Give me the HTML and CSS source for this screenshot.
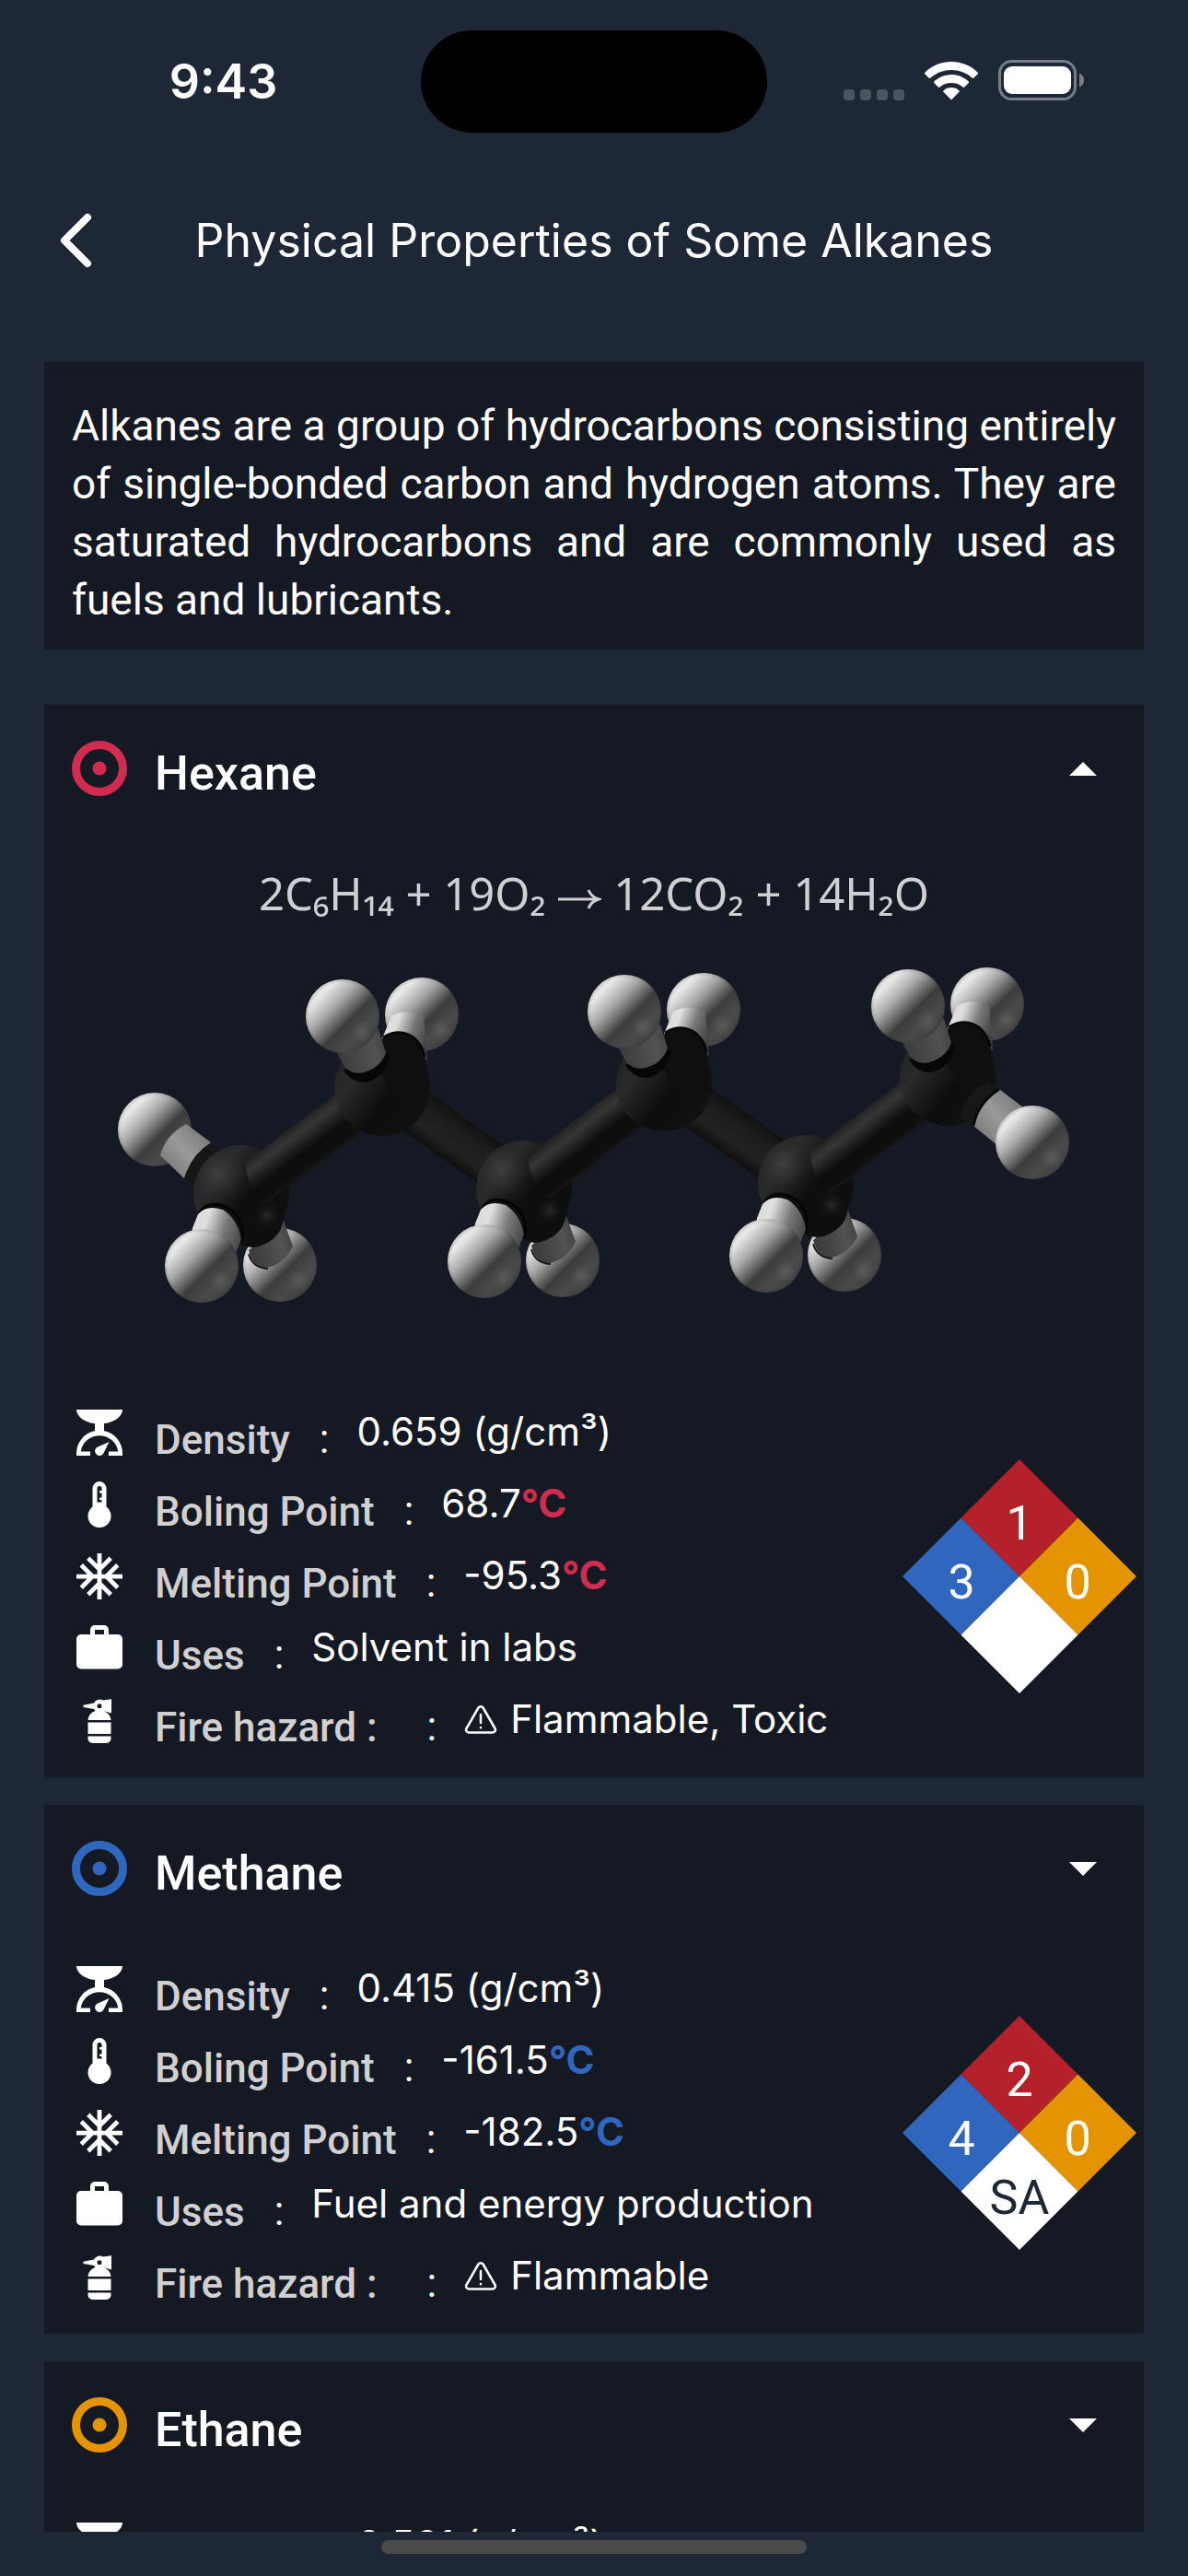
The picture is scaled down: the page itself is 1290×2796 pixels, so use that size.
FILE: index.html
```
<!DOCTYPE html>
<html lang="en">
<head>
  <meta charset="UTF-8">
  <meta name="viewport" content="width=device-width, initial-scale=1">
  <title>Physical Properties of Some Alkanes</title>
  <link rel="stylesheet" href="styles.css">
</head>
<body>
  <!-- shared icons -->
  <svg class="defs" width="0" height="0" aria-hidden="true">
    <symbol id="icon-scale" viewBox="0 0 24 24">
      <path d="M2 2h20c0 3-3.6 5.6-8 6v3.2A10 10 0 0 1 22 21v1h-6v-1.8h4.1A8.2 8.2 0 0 0 3.9 20.2H8V22H2v-1a10 10 0 0 1 8-9.8V8C5.6 7.6 2 5 2 2z"/>
      <path d="M16.2 16l-2.3 4.700a2 2 0 1 1-3.100-2.300z"/>
    </symbol>
    <symbol id="icon-thermometer" viewBox="0 0 24 24">
      <path fill-rule="evenodd" d="M15 13V5a3 3 0 0 0-6 0v8a5 5 0 1 0 6 0zM12 4a1 1 0 0 1 1 1v1h-1v1h1v2h-1v1h1v1h-2V5a1 1 0 0 1 1-1z"/>
    </symbol>
    <symbol id="icon-snow" viewBox="0 0 24 24">
      <path fill="none" stroke="currentColor" stroke-width="1.9" d="M12 2v20M2 12h20M7.1 4.1L12 9l4.9-4.9M7.1 19.9L12 15l4.9 4.9M4.1 7.1L9 12l-4.9 4.9M19.9 7.1L15 12l4.9 4.9"/>
    </symbol>
    <symbol id="icon-case" viewBox="0 0 24 24">
      <path fill-rule="evenodd" d="M10 2h4a2 2 0 0 1 2 2v2h4a2 2 0 0 1 2 2v11a2 2 0 0 1-2 2H4a2 2 0 0 1-2-2V8a2 2 0 0 1 2-2h4V4a2 2 0 0 1 2-2zM10 4v2h4V4z"/>
    </symbol>
    <symbol id="icon-extinguisher" viewBox="0 0 24 24">
      <path fill-rule="evenodd" d="M5 5.5L9.6 4.6A2.8 2.8 0 0 1 13.5 3.4L17.2 2.9V9l-3.4-.9C15.6 8.7 16.8 10 17 12H7c.2-2 1.4-3.4 3.2-4L9.6 7.2 5 6.4zM12 4.9a1 1 0 1 0 0 2 1 1 0 0 0 0-2z"/>
      <path d="M7 13h10v5H7zM7 19h10v1a2 2 0 0 1-2 2H9a2 2 0 0 1-2-2z"/>
    </symbol>
    <symbol id="icon-warning" viewBox="0 0 36 32">
      <path fill="none" stroke="currentColor" stroke-width="2.5" stroke-linejoin="round" d="M15.5 3.5L2.5 26a3 3 0 0 0 2.5 4.5h26a3 3 0 0 0 2.5-4.5L20.5 3.5a3 3 0 0 0-5 0z"/>
      <path fill="none" stroke="currentColor" stroke-width="2.5" stroke-linecap="round" d="M18 11v9M18 25v.2"/>
    </symbol>
    <symbol id="icon-target" viewBox="0 0 60 60">
      <circle cx="30" cy="30" r="25.5" fill="none" stroke="currentColor" stroke-width="9"/>
      <circle cx="30" cy="30" r="7.5"/>
    </symbol>
  </svg>

  <div class="status-bar">
    <span class="time">9:43</span>
    <span class="island"></span>
    <span class="status-icons">
      <svg class="signal" width="66" height="12" viewBox="0 0 66 12">
        <rect width="12" height="12" rx="4"/><rect x="18" width="12" height="12" rx="4"/><rect x="36" width="12" height="12" rx="4"/><rect x="54" width="12" height="12" rx="4"/>
      </svg>
      <svg width="58" height="42" viewBox="0 0 58 42">
        <path d="M29 0C40 0 50 4 57.5 11.5c.7.7.7 1.3 0 2L53.5 17.500c-.6.6-1.3.6-2 0C45.500 12 37.500 9 29 9S12.500 12 6.500 17.500c-.7.6-1.400.6-2 0L.5 13.500c-.7-.7-.7-1.300 0-2C8 4 18 0 29 0z"/>
        <path d="M29 14c7 0 13.5 2.6 18.500 7.200.7.7.7 1.300 0 2l-4.200 4.200c-.6.6-1.200.6-1.900 0C38 24.500 33.700 23 29 23s-9 1.500-12.400 4.400c-.7.6-1.300.6-1.900 0l-4.200-4.200c-.7-.7-.7-1.300 0-2C15.500 16.600 22 14 29 14z"/>
        <path d="M29 28c3.2 0 6.2 1.200 8.300 3.200.7.6.7 1.200 0 1.900l-7.300 7.400c-.7.7-1.300.7-2 0l-7.300-7.400c-.7-.7-.7-1.300 0-1.900C22.800 29.200 25.800 28 29 28z"/>
      </svg>
      <svg width="94" height="44" viewBox="0 0 94 44">
        <rect x="1.5" y="1.5" width="82" height="41" rx="13" fill="none" stroke="#787e87" stroke-width="3"/>
        <rect x="6" y="7" width="73" height="30" rx="9"/>
        <path d="M88 14.5c3 1 5 4 5 7.5s-2 6.5-5 7.5z" fill="#787e87"/>
      </svg>
    </span>
  </div>

  <header class="app-bar">
    <button class="back-button" aria-label="Back">
      <svg width="36" height="60" viewBox="0 0 36 60"><path d="M31 5L6 30l25 25" fill="none" stroke="#fff" stroke-width="8" stroke-linecap="round" stroke-linejoin="round"/></svg>
    </button>
    <h1>Physical Properties of Some Alkanes</h1>
  </header>

  <main class="content">
    <p class="intro">Alkanes are a group of hydrocarbons consisting entirely of single-bonded carbon and hydrogen atoms. They are saturated hydrocarbons and are commonly used as fuels and lubricants.</p>

    <section class="card red">
      <div class="card-header">
        <svg class="target"><use href="#icon-target"/></svg>
        <h2>Hexane</h2>
        <button class="toggle" aria-label="Collapse Hexane" aria-expanded="true">
          <svg width="30" height="15" viewBox="0 0 30 15"><path d="M0 15L15 0l15 15z"/></svg>
        </button>
      </div>

      <p class="formula">2C₆H₁₄ + 19O₂ <svg class="arrow" viewBox="0 0 48 24" role="img" aria-label="yields"><path d="M1 12h44M34 2c2 5 6 8.5 11 10-5 1.5-9 5-11 10"/></svg> 12CO₂ + 14H₂O</p>

      <svg class="molecule" viewBox="0 0 1134 420" role="img" aria-label="Hexane molecule">
        <defs>
          <linearGradient id="hydrogen" x1=".12" y1=".12" x2=".88" y2=".88">
            <stop offset="0" stop-color="#dedede"/>
            <stop offset=".12" stop-color="#e8e8e8"/>
            <stop offset=".34" stop-color="#a8a8a8"/>
            <stop offset=".6" stop-color="#3d3d3d"/>
            <stop offset=".8" stop-color="#4a4a4a"/>
            <stop offset="1" stop-color="#404040"/>
          </linearGradient>
          <radialGradient id="shine" cx=".76" cy=".71" r=".15">
            <stop offset="0" stop-color="#6c6c6c" stop-opacity=".5"/>
            <stop offset="1" stop-color="#6c6c6c" stop-opacity="0"/>
          </radialGradient>
          <radialGradient id="rim">
            <stop offset=".9" stop-color="#222" stop-opacity="0"/>
            <stop offset="1" stop-color="#222" stop-opacity=".15"/>
          </radialGradient>
          <linearGradient id="carbon" x1=".1" y1=".2" x2=".9" y2=".8">
            <stop offset="0" stop-color="#242424"/>
            <stop offset=".2" stop-color="#2a2a2a"/>
            <stop offset=".6" stop-color="#0d0d0d"/>
            <stop offset="1" stop-color="#111"/>
          </linearGradient>
          <radialGradient id="carbon-shine" cx=".26" cy=".3" r=".3">
            <stop offset="0" stop-color="#444" stop-opacity=".8"/>
            <stop offset="1" stop-color="#333" stop-opacity="0"/>
          </radialGradient>
          <radialGradient id="lobe-shine">
            <stop offset="0" stop-color="#2a2a2a"/>
            <stop offset="1" stop-color="#0e0e0e" stop-opacity="0"/>
          </radialGradient>
          <linearGradient id="bond-rise" x2="0" y2="1">
            <stop offset="0" stop-color="#242424"/>
            <stop offset=".2" stop-color="#363636"/>
            <stop offset=".6" stop-color="#0d0d0d"/>
            <stop offset=".9" stop-color="#0e0e0e"/>
            <stop offset="1" stop-color="#171717"/>
          </linearGradient>
          <linearGradient id="bond-fall" x2="0" y2="1">
            <stop offset="0" stop-color="#111"/>
            <stop offset=".3" stop-color="#1d1d1d"/>
            <stop offset=".7" stop-color="#222"/>
            <stop offset="1" stop-color="#0e0e0e"/>
          </linearGradient>
          <linearGradient id="stub-light" x1="0" y1=".3" x2="1" y2=".7">
            <stop offset="0" stop-color="#dadada"/>
            <stop offset=".25" stop-color="#e0e0e0"/>
            <stop offset=".6" stop-color="#777"/>
            <stop offset="1" stop-color="#3c3c3c"/>
          </linearGradient>
          <linearGradient id="stub-dark" x1="0" y1=".6" x2="1" y2=".3">
            <stop offset="0" stop-color="#3a3a3a"/>
            <stop offset=".7" stop-color="#525252"/>
            <stop offset="1" stop-color="#404040"/>
          </linearGradient>
          <linearGradient id="stub-end" x1="1" y1="0" x2="0" y2="1">
            <stop offset="0" stop-color="#6e6e6e"/>
            <stop offset=".5" stop-color="#9a9a9a"/>
            <stop offset="1" stop-color="#6e6e6e"/>
          </linearGradient>

          <g id="h-atom">
            <circle r="40" fill="url(#hydrogen)"/>
            <circle r="40" fill="url(#shine)"/>
            <circle r="40" fill="url(#rim)"/>
          </g>

          <!-- carbon with both hydrogens above it -->
          <g id="c-up">
            <use href="#h-atom" x="43" y="-80"/>
            <path d="M0-54L10-78q15-9 35 0l4 48z" fill="url(#stub-light)"/>
            <circle r="52" fill="url(#carbon)"/>
            <path d="M1-55Q20-66 35-54 44-46 46-34L52-4 20 20-4-20z" fill="#0f0f0f"/>
            <path d="M1-55Q20-66 35-54 44-46 46-34" fill="none" stroke="#060606" stroke-width="3"/>
            <path d="M-42-20Q-34-6-18-6 2-10 8-34L0-44z" fill="#070707"/>
            <path d="M-52-44L-41-23Q-32-14-20-17-2-22 4-38L-4-64-26-76z" fill="url(#stub-dark)"/>
            <use href="#h-atom" x="-43" y="-78"/>
          </g>

          <!-- carbon with both hydrogens below it -->
          <g id="c-down">
            <use href="#h-atom" x="42" y="78"/>
            <path d="M8 62Q12 80 27 81 46 78 56 58L46 30z" fill="url(#stub-dark)"/>
            <path d="M8 66Q12 81 29 82" fill="none" stroke="#161616" stroke-width="2"/>
            <circle r="52" fill="url(#carbon)"/>
            <circle r="52" fill="url(#carbon-shine)"/>
            <path d="M0 56Q12 62 24 56 42 48 45 32L52 4 20-6-6 30z" fill="#0e0e0e"/>
            <circle cx="28" cy="24" r="16" fill="url(#lobe-shine)"/>
            <path d="M-46 22Q-36 6-14 16 6 30 0 54" fill="#101010" stroke="#050505" stroke-width="3"/>
            <path d="M-47 23Q-38 12-20 18-4 28 0 50-4 62-10 72L-30 84-56 60-53 38z" fill="url(#stub-light)"/>
            <use href="#h-atom" x="-43" y="79"/>
          </g>
        </defs>

        <g fill="url(#bond-rise)">
          <rect y="-25" width="189" height="50" transform="translate(186 275) rotate(-37)"/>
          <rect y="-25" width="189" height="50" transform="translate(490 270) rotate(-37)"/>
          <rect y="-25" width="189" height="50" transform="translate(797 264) rotate(-37)"/>
        </g>
        <g fill="url(#bond-fall)">
          <rect y="-25" width="187" height="50" transform="translate(337 161) rotate(35)"/>
          <rect y="-25" width="187" height="50" transform="translate(643 156) rotate(35)"/>
        </g>

        <use href="#h-atom" x="90" y="206"/>
        <path d="M150 220l24 16-32 38-20-15q4-22 28-39z" fill="#161616"/>
        <path d="M124 200l27 20q-22 14-29 39l-26-25q6-22 28-34z" fill="url(#stub-end)"/>

        <use href="#c-down" x="184" y="275"/>
        <use href="#c-down" x="491" y="270"/>
        <use href="#c-down" x="797" y="264"/>
        <use href="#c-up" x="337" y="161"/>
        <use href="#c-up" x="643" y="156"/>
        <use href="#c-up" x="951" y="150"/>

        <!-- front end of the rising bonds, over the lower carbons -->
        <g fill="url(#bond-rise)">
          <path d="M24-24H90V25H14Q8 0 24-24z" transform="translate(184 275) rotate(-37)"/>
          <path d="M24-24H90V25H14Q8 0 24-24z" transform="translate(491 270) rotate(-37)"/>
          <path d="M24-24H90V25H14Q8 0 24-24z" transform="translate(797 264) rotate(-37)"/>
        </g>

        <path d="M994 154l13 8q-24 16-28 40l-14-9q4-26 29-39z" fill="#171717"/>
        <path d="M1007 162l26 20-28 41-26-21q4-24 28-40z" fill="url(#stub-end)"/>
        <path d="M1007 162q-24 16-28 40" fill="none" stroke="#060606" stroke-width="3"/>
        <use href="#h-atom" x="1043" y="220"/>
      </svg>

      <div class="details">
        <ul class="properties">
          <li><svg><use href="#icon-scale"/></svg><span class="label">Density</span><span class="colon">:</span><span class="value">0.659 (g/cm³)</span></li>
          <li><svg><use href="#icon-thermometer"/></svg><span class="label">Boling Point</span><span class="colon">:</span><span class="value">68.7<b>°C</b></span></li>
          <li><svg><use href="#icon-snow"/></svg><span class="label">Melting Point</span><span class="colon">:</span><span class="value">-95.3<b>°C</b></span></li>
          <li><svg><use href="#icon-case"/></svg><span class="label">Uses</span><span class="colon">:</span><span class="value">Solvent in labs</span></li>
          <li><svg><use href="#icon-extinguisher"/></svg><span class="label">Fire hazard :&nbsp;&nbsp;</span><span class="colon">:</span><span class="value"><svg class="warning"><use href="#icon-warning"/></svg>Flammable, Toxic</span></li>
        </ul>
        <svg class="hazard" viewBox="0 0 254 254" role="img" aria-label="Health 3, flammability 1, reactivity 0">
          <path fill="#b5212b" d="M127 0l63.5 63.5L127 127 63.5 63.5z"/>
          <path fill="#3066be" d="M63.5 63.5L127 127l-63.5 63.5L0 127z"/>
          <path fill="#e49400" d="M190.5 63.5L254 127l-63.5 63.5L127 127z"/>
          <path fill="#fff" d="M127 127l63.5 63.5L127 254l-63.5-63.5z"/>
          <text x="127" y="87">1</text>
          <text x="64" y="151">3</text>
          <text x="190" y="151">0</text>
        </svg>
      </div>
    </section>

    <section class="card blue">
      <div class="card-header">
        <svg class="target"><use href="#icon-target"/></svg>
        <h2>Methane</h2>
        <button class="toggle" aria-label="Expand Methane" aria-expanded="false">
          <svg width="30" height="15" viewBox="0 0 30 15"><path d="M0 0h30L15 15z"/></svg>
        </button>
      </div>

      <div class="details">
        <ul class="properties">
          <li><svg><use href="#icon-scale"/></svg><span class="label">Density</span><span class="colon">:</span><span class="value">0.415 (g/cm³)</span></li>
          <li><svg><use href="#icon-thermometer"/></svg><span class="label">Boling Point</span><span class="colon">:</span><span class="value">-161.5<b>°C</b></span></li>
          <li><svg><use href="#icon-snow"/></svg><span class="label">Melting Point</span><span class="colon">:</span><span class="value">-182.5<b>°C</b></span></li>
          <li><svg><use href="#icon-case"/></svg><span class="label">Uses</span><span class="colon">:</span><span class="value">Fuel and energy production</span></li>
          <li><svg><use href="#icon-extinguisher"/></svg><span class="label">Fire hazard :&nbsp;&nbsp;</span><span class="colon">:</span><span class="value"><svg class="warning"><use href="#icon-warning"/></svg>Flammable</span></li>
        </ul>
        <svg class="hazard" viewBox="0 0 254 254" role="img" aria-label="Health 4, flammability 2, reactivity 0, simple asphyxiant">
          <path fill="#b5212b" d="M127 0l63.5 63.5L127 127 63.5 63.5z"/>
          <path fill="#3066be" d="M63.5 63.5L127 127l-63.5 63.5L0 127z"/>
          <path fill="#e49400" d="M190.5 63.5L254 127l-63.5 63.5L127 127z"/>
          <path fill="#fff" d="M127 127l63.5 63.5L127 254l-63.5-63.5z"/>
          <text x="127" y="87">2</text>
          <text x="64" y="151">4</text>
          <text x="190" y="151">0</text>
          <text class="special" x="127" y="215">SA</text>
        </svg>
      </div>
    </section>

    <section class="card orange">
      <div class="card-header">
        <svg class="target"><use href="#icon-target"/></svg>
        <h2>Ethane</h2>
        <button class="toggle" aria-label="Expand Ethane" aria-expanded="false">
          <svg width="30" height="15" viewBox="0 0 30 15"><path d="M0 0h30L15 15z"/></svg>
        </button>
      </div>

      <div class="details">
        <ul class="properties">
          <li><svg><use href="#icon-scale"/></svg><span class="label">Density</span><span class="colon">:</span><span class="value">0.561 (g/cm³)</span></li>
        </ul>
      </div>
    </section>
  </main>

  <div class="home-bar"></div>
</body>
</html>
```
FILE: styles.css
```
* {
  box-sizing: border-box;
}
body {
  margin: 0;
  height: 100vh;
  display: flex;
  flex-direction: column;
  overflow: hidden;
  background-color: #1e2735;
  color: #fff;
  font-family: Roboto, sans-serif;
}
h1, h2, p, ul {
  margin: 0;
  padding: 0;
}
button {
  border: none;
  padding: 0;
  background: none;
  color: inherit;
  cursor: pointer;
}
svg {
  display: block;
  flex: none;
  fill: currentColor;
}
.defs {
  position: absolute;
}

/* status bar */
.status-bar {
  flex: none;
  display: grid;
  grid-template-columns: 1fr 376px 1fr;
  align-items: center;
  height: 177px;
}
.time {
  padding-left: 28px;
  font-family: Inter, sans-serif;
  font-size: 52px;
  font-weight: 600;
  text-align: center;
}
.island {
  height: 111px;
  border-radius: 56px;
  background-color: #000;
}
.status-icons {
  display: flex;
  justify-content: flex-end;
  align-items: flex-end;
  gap: 22px;
  padding: 0 112px 4px 0;
}
.signal {
  color: #4b545f;
}

/* title bar */
.app-bar {
  flex: none;
  display: grid;
  grid-template-columns: 100px 1fr 100px;
  align-items: center;
  height: 168px;
}
.back-button {
  justify-self: end;
}
h1 {
  font-family: Inter, sans-serif;
  font-size: 50px;
  font-weight: 400;
  text-align: center;
}

.content {
  flex: 1;
  min-height: 0;
  overflow: hidden;
  padding: 48px 48px 0;
}
.intro {
  margin-bottom: 60px;
  padding: 38px 30px 22px;
  background-color: #151923;
  font-size: 46px;
  line-height: 63px;
  text-align: justify;
}

/* cards */
.card {
  margin-bottom: 30px;
  padding: 39px 0 14px 30px;
  background-color: #151923;
}
.red { --accent: #cf2c50; }
.blue { --accent: #3066be; }
.orange { --accent: #e49400; }
.card-header {
  display: flex;
  align-items: flex-start;
  padding-right: 30px;
}
.target {
  width: 60px;
  height: 60px;
  color: var(--accent);
}
h2 {
  flex: 1;
  padding-left: 30px;
  font-size: 52px;
  font-weight: 500;
  line-height: 72px;
}
.toggle {
  display: grid;
  place-items: center;
  width: 72px;
  height: 60px;
}
.formula {
  margin: 60px 30px 18px 0;
  color: #d0d0d2;
  font-family: "Noto Sans", sans-serif;
  font-size: 49px;
  line-height: 66px;
  text-align: center;
}
.arrow {
  display: inline-block;
  width: 48px;
  height: 24px;
  fill: none;
  stroke: currentColor;
  stroke-width: 3;
}
.molecule {
  width: calc(100% - 30px);
  margin-bottom: 85px;
}

.details {
  display: flex;
  align-items: flex-start;
  justify-content: space-between;
  margin-top: 59px;
  padding-right: 8px;
}
.properties {
  list-style: none;
}
.properties li {
  display: flex;
  align-items: flex-start;
  height: 78px;
  white-space: nowrap;
}
.properties li > svg {
  width: 60px;
  height: 60px;
  margin-right: 30px;
}
.label {
  color: #d0d0d2;
  font-size: 44px;
  font-weight: 500;
  line-height: 76px;
}
.colon {
  margin: 0 30px 0 32px;
  font-size: 44px;
  line-height: 74px;
}
.value {
  display: flex;
  align-items: center;
  font-family: Inter, sans-serif;
  font-size: 42px;
  line-height: 58px;
}
.value b {
  color: var(--accent);
  font-weight: 700;
}
.warning {
  width: 36px;
  height: 32px;
  margin-right: 14px;
}
.hazard {
  width: 254px;
  height: 254px;
  margin-top: 59px;
}
.hazard text {
  fill: #fff;
  font-size: 52px;
  text-anchor: middle;
}
.hazard .special {
  fill: #1e2735;
}

.home-bar {
  flex: none;
  align-self: center;
  width: 462px;
  height: 15px;
  margin: 9px 0 24px;
  border-radius: 8px;
  background-color: #4a4a4a;
}
```
